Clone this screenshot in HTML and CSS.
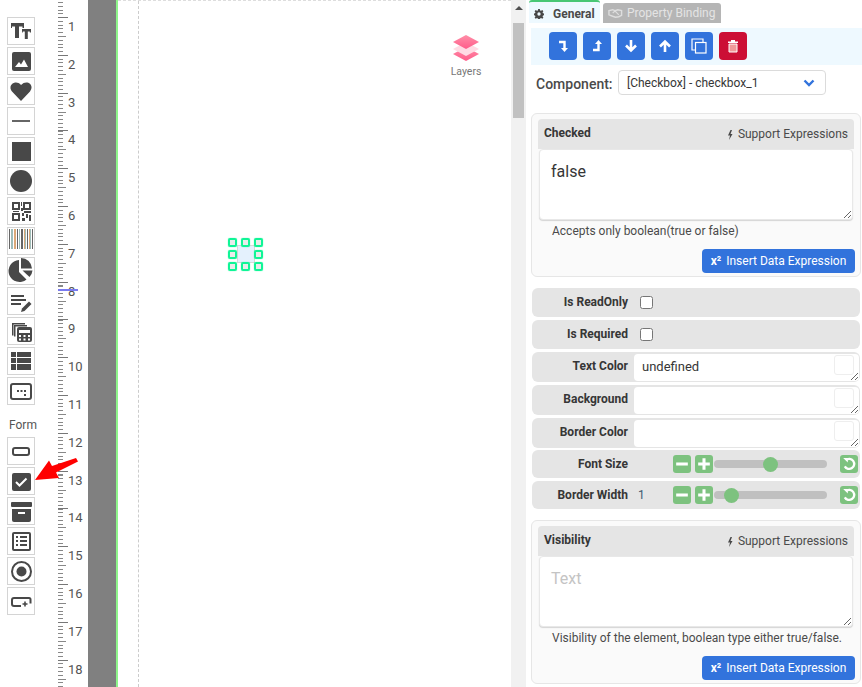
FILE: index.html
```html
<!DOCTYPE html>
<html lang="en">
<head>
  <meta charset="UTF-8">
  <title>Form Designer</title>
  <link rel="stylesheet" href="styles.css">
</head>
<body>

<div class="app">

  <!-- component palette -->
  <div class="palette">
    <div class="tool"><svg viewBox="0 0 26 26"><path d="M3 5h13v5h-1.500v-1.500h-3.500v11.500h-4v-11.500h-3v1.500h-1z"/><path d="M14 11h9v3.500h-1.200v-1h-2v7.500h-3v-7.500h-2v1h-.8z"/></svg></div>
    <div class="tool"><svg viewBox="0 0 26 26"><rect x="4" y="4" width="19" height="19" rx="2"/><path d="M7 19l4-5 2 2.500 3-5 4 7.500z" fill="#fff"/></svg></div>
    <div class="tool"><svg viewBox="0 0 26 26"><path d="M13 23l-9-9.500c-5-6 3.500-12.500 9-6.500 5.500-6 14-.5 9 6.500z"/></svg></div>
    <div class="tool"><svg viewBox="0 0 26 26"><rect x="4" y="12" width="18" height="2" fill="#666"/></svg></div>
    <div class="tool"><svg viewBox="0 0 26 26"><rect x="4" y="4" width="19" height="19"/></svg></div>
    <div class="tool"><svg viewBox="0 0 26 26"><circle cx="13" cy="13" r="11"/></svg></div>
    <div class="tool"><svg viewBox="0 0 26 26"><path d="M4 4h8v8h-8zM6 6v4h4v-4zM15 4h8v8h-8zM17 6v4h4v-4zM4 15h8v8h-8zM6 17v4h4v-4z" fill-rule="evenodd"/><path d="M13 4h1v4h-1zM13 10h2v3h-2zM16 13h7v2h-7zM14 15h2v3h-2zM18 16h2v4h-2zM21 17h2v6h-2zM14 20h3v3h-3zM5 13h6v1h-6z"/></svg></div>
    <div class="tool"><svg viewBox="0 0 26 26"><g transform="translate(0 -2)"><path d="M1 3h1v20h-1zM9 3h1v20h-1zM13 3h2v20h-2zM19 3h1v20h-1zM24 3h1v20h-1z" fill="#666"/><path d="M3 3h2v20h-2zM11 3h1v20h-1zM17 3h1v20h-1zM22 3h1v20h-1z" fill="#9fbcb8"/><path d="M6 3h2v20h-2zM16 3h1v20h-1zM21 3h1v20h-1z" fill="#dba978"/></g></svg></div>
    <div class="tool"><svg viewBox="0 0 26 26"><path d="M11 2a11 11 0 1 0 7.500 19.500l-7.500-7.500z"/><path d="M13 0a11 11 0 0 1 11 10.500h-11z"/><path d="M14.500 12.500h10a11 11 0 0 1-3 6.500z"/></svg></div>
    <div class="tool"><svg viewBox="0 0 26 26"><path d="M3 7h13v2h-13zM3 11h15v2h-15zM3 15h10v2h-10z"/><path d="M13 24l1-3.500 7-7 2.500 2.500-7 7z"/></svg></div>
    <div class="tool"><svg viewBox="0 0 26 26"><path d="M4 6h13v1.500h-11.500v11h-1.500z" transform="translate(0 -1)"/><path d="M6 8h13v1.500h-11.500v10h-1.500z" transform="translate(0 -1)"/><rect x="9" y="9" width="15" height="15" rx="2"/><path d="M11 12h11v3h-11zM11 17h2v2h-2zM15.500 17h2v2h-2zM20 17h2v2h-2zM11 20.500h2v2h-2zM15.500 20.500h2v2h-2zM20 20.500h2v2h-2z" fill="#fff"/></svg></div>
    <div class="tool"><svg viewBox="0 0 26 26"><path d="M3 4h5v5h-5zM9 4h14v5h-14zM3 10h5v5h-5zM9 10h14v5h-14zM3 16h5v6h-5zM9 16h14v6h-14z"/></svg></div>
    <div class="tool"><svg viewBox="0 0 26 26"><rect x="3" y="6" width="20" height="15" rx="2" fill="none" stroke="#484848" stroke-width="2"/><path d="M9 12h2v2h-2zM12.500 12h2v2h-2zM16 12h2v2h-2zM16 16h2v2h-2z"/></svg></div>

    <div class="palette-title">Form</div>

    <div class="tool"><svg viewBox="0 0 26 26"><rect x="5" y="10" width="16" height="7" rx="2" fill="none" stroke="#484848" stroke-width="2"/></svg></div>
    <div class="tool"><svg viewBox="0 0 26 26"><rect x="4" y="5" width="19" height="18" rx="2"/><path d="M8 14l3.500 3.500 7-7" fill="none" stroke="#fff" stroke-width="2"/></svg></div>
    <div class="tool"><svg viewBox="0 0 26 26"><rect x="3" y="4" width="21" height="5" rx="1"/><path d="M4 11h19v11a2 2 0 0 1-2 2h-15a2 2 0 0 1-2-2z"/><rect x="10" y="14" width="7" height="2" fill="#fff"/></svg></div>
    <div class="tool"><svg viewBox="0 0 26 26"><rect x="5" y="5" width="17" height="17" rx="1" fill="none" stroke="#484848" stroke-width="2"/><path d="M8 8h2v2h-2zM12 8h7v2h-7zM8 12h2v2h-2zM12 12h7v2h-7zM8 16h2v2h-2zM12 16h7v2h-7z"/></svg></div>
    <div class="tool"><svg viewBox="0 0 26 26"><circle cx="13.500" cy="13.500" r="9.500" fill="none" stroke="#484848" stroke-width="2"/><circle cx="13.500" cy="13.500" r="5"/></svg></div>
    <div class="tool"><svg viewBox="0 0 26 26"><path d="M13 18h-7a2 2 0 0 1-2-2v-4a2 2 0 0 1 2-2h15a1.500 1.500 0 0 1 1.500 1.500v4" fill="none" stroke="#484848" stroke-width="2"/><path d="M16.200 13.500h1.600v1.700h1.700v1.600h-1.700v1.700h-1.600v-1.700h-1.700v-1.600h1.700z"/></svg></div>
  </div>

  <!-- ruler -->
  <div class="ruler">
    <div class="ruler-mark"></div>
    <span class="ruler-num">1</span><span class="ruler-num">2</span><span class="ruler-num">3</span>
    <span class="ruler-num">4</span><span class="ruler-num">5</span><span class="ruler-num">6</span>
    <span class="ruler-num">7</span><span class="ruler-num">8</span><span class="ruler-num">9</span>
    <span class="ruler-num">10</span><span class="ruler-num">11</span><span class="ruler-num">12</span>
    <span class="ruler-num">13</span><span class="ruler-num">14</span><span class="ruler-num">15</span>
    <span class="ruler-num">16</span><span class="ruler-num">17</span><span class="ruler-num">18</span>
  </div>

  <div class="gutter"></div>

  <!-- design canvas -->
  <div class="canvas">
    <div class="margin-line"></div>

    <div class="layers">
      <svg viewBox="0 0 28 26" width="28" height="26">
        <defs>
          <linearGradient id="lg" x1="0" y1="0" x2="0" y2="1">
            <stop offset="0" stop-color="#ff8fa8"/>
            <stop offset="1" stop-color="#ff5c8a"/>
          </linearGradient>
        </defs>
        <path d="M14 12l13 7-13 7-13-7z" fill="url(#lg)"/>
        <path d="M14 7l13 7-13 7-13-7z" fill="#ffdbe4"/>
        <path d="M14 0l13 7-13 7-13-7z" fill="url(#lg)"/>
      </svg>
      <span>Layers</span>
    </div>

    <div class="selected">
      <i class="handle h1"></i><i class="handle h2"></i><i class="handle h3"></i>
      <i class="handle h4"></i><i class="handle h5"></i>
      <i class="handle h6"></i><i class="handle h7"></i><i class="handle h8"></i>
    </div>
  </div>

  <div class="scrollbar">
    <div class="scroll-up"></div>
    <div class="scroll-thumb"></div>
  </div>

  <!-- properties -->
  <div class="panel">
    <div class="tabs">
      <div class="tab tab-active">
        <svg viewBox="0 0 12 12" width="10" height="10"><path d="M5 0h2l.3 1.700 1.200.5 1.400-1 1.400 1.400-1 1.400.5 1.200 1.700.3v2l-1.700.3-.5 1.200 1 1.400-1.400 1.400-1.400-1-1.200.5-.3 1.700h-2l-.3-1.700-1.200-.5-1.400 1-1.400-1.400 1-1.400-.5-1.200-1.700-.3v-2l1.700-.3.5-1.200-1-1.400 1.400-1.400 1.400 1 1.200-.5zM6 4a2 2 0 1 0 0 4 2 2 0 0 0 0-4z" fill="#484848" fill-rule="evenodd"/></svg>
        General
      </div>
      <div class="tab tab-off">
        <svg viewBox="0 0 16 10" width="15" height="10"><path d="M1 2.500l4-1 2.500 1 3-1 4 1v5l-3 1.500-3.500 0.500-3-1-4-1.500z" fill="none" stroke="#dedede" stroke-width="1.500"/><path d="M5 5l2.500-2 4 4" fill="none" stroke="#dedede" stroke-width="1.200"/></svg>
        Property Binding
      </div>
    </div>

    <div class="toolbar">
      <button class="btn-sq"><svg viewBox="0 0 14 14"><path d="M3 3h5.500v7" fill="none" stroke="#fff" stroke-width="2.400"/><path d="M5 9h7l-3.500 4z" fill="#fff"/></svg></button>
      <button class="btn-sq"><svg viewBox="0 0 14 14"><path d="M3 11h5.500v-7" fill="none" stroke="#fff" stroke-width="2.400"/><path d="M5 5h7l-3.500-4z" fill="#fff"/></svg></button>
      <button class="btn-sq"><svg viewBox="0 0 14 14"><path d="M7 1v10M2 6.500l5 5 5-5" fill="none" stroke="#fff" stroke-width="2.600"/></svg></button>
      <button class="btn-sq"><svg viewBox="0 0 14 14"><path d="M7 13v-10M2 7.500l5-5 5 5" fill="none" stroke="#fff" stroke-width="2.600"/></svg></button>
      <button class="btn-sq"><svg viewBox="0 0 16 16" class="big"><rect x="4.500" y="4.500" width="10.500" height="10.500" fill="none" stroke="#fff" stroke-width="1.200"/><path d="M4.500 12h-3.500v-11h11v3.500" fill="none" stroke="#fff" stroke-width="1.200"/></svg></button>
      <button class="btn-sq btn-red"><svg viewBox="0 0 14 14"><path d="M5 1h4v1.500h-4zM2 2.500h10v1.500h-10z" fill="#fff"/><path d="M3 5h8v8h-8z" fill="#f09a9a" stroke="#fff" stroke-width="1"/></svg></button>
    </div>

    <div class="component-row">
      <label class="component-label">Component:</label>
      <div class="component-select">
        [Checkbox] - checkbox_1
        <svg viewBox="0 0 12 8" width="12" height="8"><path d="M1.500 1.500l4.500 4.500 4.500-4.500" fill="none" stroke="#3273dc" stroke-width="2.400"/></svg>
      </div>
    </div>

    <div class="card">
      <div class="card-head">
        <b>Checked</b>
        <span class="expr"><svg viewBox="0 0 6 10" width="6" height="10"><path d="M3.500 0l-2.500 5.500h2l-1 4.500 3.500-6h-2l1.500-4z" fill="#484848"/></svg> Support Expressions</span>
      </div>
      <textarea class="card-input">false</textarea>
      <p class="hint">Accepts only boolean(true or false)</p>
      <div class="card-foot"><button class="btn-expr"><b>x²</b> Insert Data Expression</button></div>
    </div>

    <div class="rows">
      <div class="row"><label>Is ReadOnly</label><input type="checkbox"></div>
      <div class="row"><label>Is Required</label><input type="checkbox"></div>
      <div class="row row-color">
        <label>Text Color</label>
        <div class="color-wrap"><textarea>undefined</textarea><i class="swatch"></i></div>
      </div>
      <div class="row row-color">
        <label>Background</label>
        <div class="color-wrap"><textarea></textarea><i class="swatch"></i></div>
      </div>
      <div class="row row-color row-color-last">
        <label>Border Color</label>
        <div class="color-wrap"><textarea></textarea><i class="swatch"></i></div>
      </div>
      <div class="row row-slide">
        <label>Font Size</label>
        <span class="slide-val"></span>
        <button class="btn-green"><svg viewBox="0 0 12 12"><rect x="1" y="4.700" width="10" height="2.600" fill="#fff"/></svg></button>
        <button class="btn-green"><svg viewBox="0 0 12 12"><path d="M4.700 1h2.600v3.700h3.700v2.600h-3.700v3.700h-2.600v-3.700h-3.700v-2.600h3.700z" fill="#fff"/></svg></button>
        <input type="range" min="0" max="100" value="50">
        <button class="btn-green btn-reset"><svg viewBox="0 0 12 12"><path d="M3.300 2.700a4.300 4.300 0 1 1-.9 5.300" fill="none" stroke="#fff" stroke-width="2"/><path d="M1 .8h4v4z" fill="#fff"/></svg></button>
      </div>
      <div class="row row-slide">
        <label>Border Width</label>
        <span class="slide-val">1</span>
        <button class="btn-green"><svg viewBox="0 0 12 12"><rect x="1" y="4.700" width="10" height="2.600" fill="#fff"/></svg></button>
        <button class="btn-green"><svg viewBox="0 0 12 12"><path d="M4.700 1h2.600v3.700h3.700v2.600h-3.700v3.700h-2.600v-3.700h-3.700v-2.600h3.700z" fill="#fff"/></svg></button>
        <input type="range" min="0" max="100" value="10">
        <button class="btn-green btn-reset"><svg viewBox="0 0 12 12"><path d="M3.300 2.700a4.300 4.300 0 1 1-.9 5.300" fill="none" stroke="#fff" stroke-width="2"/><path d="M1 .8h4v4z" fill="#fff"/></svg></button>
      </div>
    </div>

    <div class="card card-visibility">
      <div class="card-head">
        <b>Visibility</b>
        <span class="expr"><svg viewBox="0 0 6 10" width="6" height="10"><path d="M3.500 0l-2.500 5.500h2l-1 4.500 3.500-6h-2l1.500-4z" fill="#484848"/></svg> Support Expressions</span>
      </div>
      <textarea class="card-input" placeholder="Text"></textarea>
      <p class="hint">Visibility of the element, boolean type either true/false.</p>
      <div class="card-foot"><button class="btn-expr"><b>x²</b> Insert Data Expression</button></div>
    </div>
  </div>

  <!-- annotation arrow on the screenshot -->
  <svg class="arrow" viewBox="0 0 50 30" width="50" height="30">
    <path d="M43 3l2 3.500-22 11 3 5.500-24 2 14-19.500 3 5.500z" fill="#f00"/>
  </svg>
</div>

</body>
</html>
```

FILE: styles.css
```css
* {
  box-sizing: border-box;
}

html, body {
  margin: 0;
  padding: 0;
  height: 100%;
  overflow: hidden;
}

body {
  font-family: 'Roboto', 'Liberation Sans', sans-serif;
  font-size: 12px;
  color: #363636;
  background: #fff;
}

.app {
  position: relative;
  display: flex;
  width: 862px;
  height: 687px;
  overflow: hidden;
}

/* palette */
.palette {
  width: 58px;
  flex: none;
  padding: 17px 0 0 7px;
  display: flex;
  flex-direction: column;
  gap: 2px;
}

.tool {
  width: 28px;
  height: 28px;
  border: 1px solid #d4d4d4;
  flex: none;
}

.tool svg {
  display: block;
  width: 26px;
  height: 26px;
  fill: #484848;
}

.palette-title {
  height: 28px;
  padding: 11px 0 0 2px;
  font-size: 12px;
  line-height: 14px;
  color: #555;
}

/* ruler */
.ruler {
  position: relative;
  width: 30px;
  flex: none;
  padding-top: 17px;
  display: flex;
  flex-direction: column;
  background-image:
    repeating-linear-gradient(to bottom, #777 0, #777 1px, transparent 1px, transparent 37.8px),
    repeating-linear-gradient(to bottom, #888 0, #888 1px, transparent 1px, transparent 18.9px),
    repeating-linear-gradient(to bottom, #888 0, #888 1px, transparent 1px, transparent 3.78px);
  background-size: 10px 100%, 8px 100%, 5px 100%;
  background-position: 0 17px, 0 17px, 0 1.88px;
  background-repeat: no-repeat;
}

.ruler-num {
  height: 37.8px;
  flex: none;
  padding-left: 10px;
  font-size: 13px;
  line-height: 20px;
  color: #555;
}

.ruler-mark {
  position: absolute;
  left: 0;
  top: 289px;
  width: 20px;
  height: 2px;
  background: #7a7af0;
}

.gutter {
  width: 30px;
  flex: none;
  background: #808080;
  border-right: 2px solid #8ef58a;
}

/* canvas */
.canvas {
  position: relative;
  flex: 1;
  background: #fff;
  border-top: 1px dashed #ddd;
}

.margin-line {
  position: absolute;
  left: 20px;
  top: 0;
  bottom: 0;
  border-left: 1px dashed #ccc;
}

.layers {
  position: absolute;
  left: 333px;
  top: 34px;
  width: 30px;
  display: flex;
  flex-direction: column;
  align-items: center;
  font-size: 10.500px;
  color: #777;
  gap: 4px;
}

.layers span {
  line-height: 13px;
}

.selected {
  position: absolute;
  left: 120px;
  top: 245px;
  width: 16px;
  height: 16px;
  background: #e4f1fd;
  outline: 1px solid #d8d8d8;
}

.handle {
  position: absolute;
  width: 9px;
  height: 9px;
  border: 2px solid #0ff596;
  border-radius: 2px;
  background: rgba(190, 200, 195, 0.35);
  box-shadow: 0 0 1px #0ff596;
}

.h1 { left: -10px; top: -8px; }
.h2 { left: 3px; top: -8px; }
.h3 { left: 16px; top: -8px; }
.h4 { left: -10px; top: 4px; }
.h5 { left: 16px; top: 4px; }
.h6 { left: -10px; top: 16px; }
.h7 { left: 3px; top: 16px; }
.h8 { left: 16px; top: 16px; }

/* scrollbar */
.scrollbar {
  width: 15px;
  flex: none;
  background: #f1f1f1;
  padding: 0 2px;
}

.scroll-up {
  width: 0;
  height: 0;
  margin: 6px auto 0;
  border-left: 4px solid transparent;
  border-right: 4px solid transparent;
  border-bottom: 4px solid #505050;
}

.scroll-thumb {
  width: 11px;
  height: 95px;
  margin-top: 13px;
  background: #c1c1c1;
}

/* properties panel */
.panel {
  width: 336px;
  flex: none;
  padding-left: 5px;
  background: #fff;
}

.tabs {
  display: flex;
  align-items: flex-end;
  gap: 3px;
  height: 23px;
  margin-left: -2px;
}

.tab {
  display: flex;
  align-items: center;
  height: 20px;
  border-radius: 3px 3px 0 0;
  font-size: 12px;
}

.tab-active {
  width: 71px;
  height: 23px;
  padding: 2px 0 0 5px;
  gap: 9px;
  background: #eef9ff;
  border-top: 2px solid #48c774;
  font-weight: 700;
  color: #4a4a4a;
}

.tab-off {
  width: 118px;
  padding-left: 5px;
  gap: 4px;
  background: #b5b5b5;
  color: #e4e4e4;
}

.toolbar {
  display: flex;
  gap: 6px;
  height: 37px;
  margin-top: 5px;
  padding: 4px 0 0 18px;
  background: #eef9ff;
}

.btn-sq {
  width: 28px;
  height: 28px;
  padding: 0;
  border: none;
  border-radius: 4px;
  background: #3273dc;
  display: flex;
  align-items: center;
  justify-content: center;
}

.btn-sq svg {
  width: 14px;
  height: 14px;
}

.btn-sq svg.big {
  width: 16px;
  height: 16px;
}

.btn-red {
  background: #cc0f35;
}

.component-row {
  display: flex;
  align-items: center;
  height: 25px;
  margin-top: 5px;
  padding-left: 5px;
}

.component-label {
  width: 82px;
  padding-top: 2px;
  font-size: 14px;
  font-weight: 500;
  color: #4a4a4a;
}

.component-select {
  display: flex;
  align-items: center;
  justify-content: space-between;
  width: 208px;
  height: 25px;
  padding: 0 10px 0 8px;
  border: 1px solid #dbdbdb;
  border-radius: 4px;
  font-size: 12px;
  color: #363636;
}

/* cards */
.card {
  width: 330px;
  height: 164px;
  margin-top: 18px;
  padding: 5px 6px 0 6px;
  background: #fafafa;
  border: 1px solid #e6e6e6;
  border-radius: 6px;
}

.card-head {
  display: flex;
  justify-content: space-between;
  align-items: flex-start;
  height: 30px;
  padding: 7px 6px 0 6px;
  background: #e5e5e5;
  border-radius: 4px 4px 0 0;
  line-height: 15px;
}

.card-head b {
  font-weight: 700;
  color: #363636;
}

.expr {
  display: flex;
  align-items: center;
  gap: 5px;
  padding-top: 1px;
  color: #4a4a4a;
}

.card-input {
  display: block;
  width: 314px;
  height: 71px;
  margin-left: 1px;
  padding: 12px 11px;
  border: 1px solid #e8e8e8;
  border-radius: 4px;
  box-shadow: 0 1px 1px #d4d4d4;
  background: #fff;
  font-family: inherit;
  font-size: 16px;
  line-height: 20px;
  color: #363636;
  outline: none;
}

.card-input::placeholder {
  color: #c4c4c4;
}

.hint {
  margin: 3px 0 0 14px;
  font-size: 12px;
  line-height: 17px;
  color: #4a4a4a;
}

.card-foot {
  display: flex;
  justify-content: flex-end;
  margin: 9px -1px 0 0;
}

.btn-expr {
  height: 24px;
  width: 153px;
  padding: 0;
  border: none;
  border-radius: 4px;
  background: #3273dc;
  color: #fff;
  font-family: inherit;
  font-size: 12px;
}

.btn-expr b {
  margin-right: 2px;
}

/* property rows */
.rows {
  display: flex;
  flex-direction: column;
  width: 328px;
  margin: 11px 0 0 1px;
}

.rows + .card {
  margin-top: 11px;
}

.row {
  display: flex;
  align-items: center;
  height: 29px;
  margin-bottom: 3px;
  background: #e5e5e5;
  border-radius: 6px;
}

.row label {
  width: 96px;
  flex: none;
  padding-bottom: 1px;
  text-align: right;
  font-weight: 700;
  color: #363636;
}

.row input[type="checkbox"] {
  width: 13px;
  height: 13px;
  margin: 0 0 0 12px;
}

.row-color {
  height: 30px;
  align-items: flex-start;
}

.row-color label {
  padding: 7px 0 0;
}

.row-color-last {
  margin-bottom: 2px;
}

.color-wrap {
  position: relative;
  margin: 2px 0 0 6px;
}

.color-wrap textarea {
  display: block;
  width: 225px;
  height: 27px;
  padding: 5px 8px;
  border: none;
  border-radius: 4px;
  background: #fff;
  font-family: inherit;
  font-size: 13px;
  line-height: 16px;
  color: #363636;
  outline: none;
}

.swatch {
  position: absolute;
  right: 5px;
  top: 1px;
  width: 20px;
  height: 20px;
  background: #fff;
  border: 1px solid #eee;
  border-radius: 3px;
}

.row-slide {
  height: 28px;
}

.row-slide label {
  padding-bottom: 0;
}

.row-slide:last-child {
  margin-bottom: 0;
}

.slide-val {
  width: 45px;
  flex: none;
  padding-left: 10px;
  color: #3d5a70;
}

.btn-green {
  width: 18px;
  height: 18px;
  flex: none;
  padding: 2px;
  margin-right: 4px;
  border: none;
  border-radius: 3px;
  background: #7dc27f;
  display: flex;
}

.btn-green svg {
  width: 14px;
  height: 14px;
}

.btn-reset {
  margin: 0 0 0 13px;
}

.row-slide input[type="range"] {
  -webkit-appearance: none;
  appearance: none;
  width: 113px;
  height: 8px;
  margin: 0 0 0 -3px;
  background: #c0c0c0;
  border-radius: 4px;
  outline: none;
}

.row-slide input[type="range"]::-webkit-slider-thumb {
  -webkit-appearance: none;
  width: 15px;
  height: 15px;
  border-radius: 50%;
  background: #7dc27f;
}

/* annotation */
.arrow {
  position: absolute;
  left: 33px;
  top: 455px;
}
```
